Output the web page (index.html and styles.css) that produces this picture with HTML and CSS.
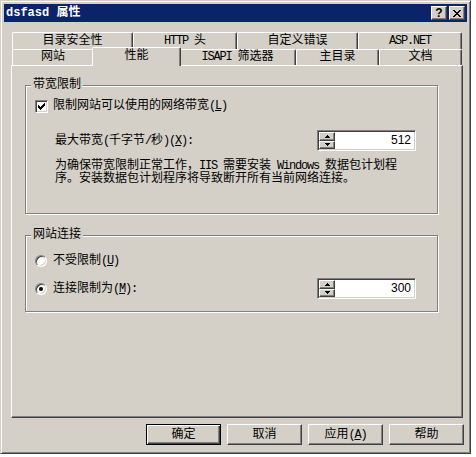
FILE: index.html
```html
<!DOCTYPE html>
<html lang="zh-CN">
<head>
  <meta charset="UTF-8">
  <title>dsfasd 属性</title>
  <link rel="stylesheet" href="styles.css">
</head>
<body>
  <div class="window">
    <div class="titlebar">
      <span class="title">dsfasd 属性</span>
      <div class="title-buttons">
        <span class="title-btn">?</span>
        <span class="title-btn">
          <svg width="8" height="7" viewBox="0 0 8 7"><path d="M0 0h2v1h-2z M6 0h2v1h-2z M1 1h2v1h-2z M5 1h2v1h-2z M2 2h4v1h-4z M3 3h2v1h-2z M2 4h4v1h-4z M1 5h2v1h-2z M5 5h2v1h-2z M0 6h2v1h-2z M6 6h2v1h-2z" fill="#000"/></svg>
        </span>
      </div>
    </div>

    <div class="tabs">
      <div class="tab-row back">
        <div class="tab tab-wide">目录安全性</div>
        <div class="tab tab-narrow"><span class="lat">HTTP </span>头</div>
        <div class="tab tab-wide">自定义错误</div>
        <div class="tab tab-narrow"><span class="lat">ASP.NET</span></div>
      </div>
      <div class="tab-row front">
        <div class="tab tab-site">网站</div>
        <div class="tab tab-perf active">性能</div>
        <div class="tab tab-isapi"><span class="lat">ISAPI </span>筛选器</div>
        <div class="tab tab-home">主目录</div>
        <div class="tab tab-docs">文档</div>
      </div>
    </div>

    <div class="panel">
      <div class="group group-bandwidth">
        <div class="group-title">带宽限制</div>
        <div class="row check-row">
          <span class="checkbox">
            <svg width="7" height="7" viewBox="0 0 7 7"><path d="M6 0h1v1h-1z M5 1h2v1h-2z M0 2h1v1h-1z M4 2h3v1h-3z M0 3h2v1h-2z M3 3h3v1h-3z M0 4h5v1h-5z M1 5h3v1h-3z M2 6h1v1h-1z" fill="#000"/></svg>
          </span>
          <span>限制网站可以使用的网络带宽<span class="lat">(<u>L</u>)</span></span>
        </div>
        <div class="row field-row">
          <span>最大带宽<span class="lat">(</span>千字节<span class="lat">/</span>秒<span class="lat">)(<u>X</u>):</span></span>
          <div class="spin">
            <div class="spin-buttons">
              <span class="spin-btn"><svg width="5" height="3" viewBox="0 0 5 3"><path d="M2 0h1v1h1v1h1v1h-5v-1h1v-1h1z" fill="#000"/></svg></span>
              <span class="spin-btn"><svg width="5" height="3" viewBox="0 0 5 3"><path d="M0 0h5v1h-1v1h-1v1h-1v-1h-1v-1h-1z" fill="#000"/></svg></span>
            </div>
            <span class="spin-value">512</span>
          </div>
        </div>
        <p class="note">为确保带宽限制正常工作，<span class="lat">IIS </span>需要安装<span class="lat"> Windows </span>数据包计划程<br>序。安装数据包计划程序将导致断开所有当前网络连接。</p>
      </div>

      <div class="group group-conn">
        <div class="group-title">网站连接</div>
        <div class="row radio-row">
          <span class="radio"></span>
          <span>不受限制<span class="lat">(<u>U</u>)</span></span>
        </div>
        <div class="row field-row radio-field">
          <span class="radio on"></span>
          <span>连接限制为<span class="lat">(<u>M</u>):</span></span>
          <div class="spin">
            <div class="spin-buttons">
              <span class="spin-btn"><svg width="5" height="3" viewBox="0 0 5 3"><path d="M2 0h1v1h1v1h1v1h-5v-1h1v-1h1z" fill="#000"/></svg></span>
              <span class="spin-btn"><svg width="5" height="3" viewBox="0 0 5 3"><path d="M0 0h5v1h-1v1h-1v1h-1v-1h-1v-1h-1z" fill="#000"/></svg></span>
            </div>
            <span class="spin-value">300</span>
          </div>
        </div>
      </div>
    </div>

    <div class="buttons">
      <span class="btn default">确定</span>
      <span class="btn">取消</span>
      <span class="btn">应用<span class="lat">(<u>A</u>)</span></span>
      <span class="btn">帮助</span>
    </div>
  </div>
</body>
</html>
```

FILE: styles.css
```css
/* Classic dialog look */
* {
  box-sizing: border-box;
}

body {
  margin: 0;
  background: #fff;
  color: #000;
  font: 12px/14px "Liberation Mono", "Noto Sans CJK SC", monospace;
}

u {
  text-decoration: underline;
}

/* Latin runs are half a CJK cell wide */
.lat {
  letter-spacing: -1.2px;
}

.window {
  width: 471px;
  height: 454px;
  background: #d4d0c8;
  border: 1px solid;
  border-color: #d4d0c8 #404040 #404040 #d4d0c8;
  box-shadow: inset 1px 1px #fff, inset -1px -1px #808080;
  padding: 3px;
}

/* Title bar */
.titlebar {
  height: 18px;
  background: #0a246a;
  display: flex;
  align-items: center;
  justify-content: space-between;
  padding: 0 2px;
}

.title {
  color: #fff;
  font-weight: bold;
  line-height: 18px;
}

.title-buttons {
  display: flex;
  gap: 2px;
}

.title-btn {
  width: 16px;
  height: 14px;
  background: #d4d0c8;
  border: 1px solid;
  border-color: #fff #404040 #404040 #fff;
  box-shadow: inset -1px -1px #808080;
  display: flex;
  align-items: center;
  justify-content: center;
  font: bold 12px/12px "Liberation Sans", sans-serif;
}

/* Tabs */
.tabs {
  margin: 10px 5px 0 8px;
}

.tab-row {
  display: flex;
  height: 17px;
}

.tab-row.front {
  height: 16px;
}

.tab {
  flex-shrink: 0;
  border: 1px solid;
  border-bottom: 0;
  border-color: #fff #404040 transparent #fff;
  box-shadow: inset -1px 0 #808080;
  border-radius: 2px 2px 0 0;
  text-align: center;
  line-height: 16px;
  white-space: nowrap;
}

.front .tab {
  line-height: 15px;
}

.tab-wide { width: 121px; }
.tab-narrow { width: 104px; }
.tab-site { width: 82px; }
.tab-perf { width: 85px; }
.tab-isapi { width: 117px; }
.tab-home { width: 83px; }
.tab-docs { width: 83px; }

.front .tab.active {
  width: 89px;
  height: 19px;
  margin: -2px -2px 0;
  line-height: 16px;
  background: #d4d0c8;
  position: relative;
  z-index: 1;
}

/* Page */
.panel {
  height: 353px;
  margin: 0 4px 0 7px;
  border: 1px solid;
  border-color: #fff #404040 #404040 #fff;
  box-shadow: inset -1px -1px #808080;
  padding: 19px 0 0 13px;
}

.group {
  width: 413px;
  border: 1px solid #808080;
  box-shadow: inset 1px 1px #fff, 1px 1px #fff;
}

.group-bandwidth {
  height: 129px;
}

.group-conn {
  height: 77px;
  margin-top: 21px;
}

.group-title {
  width: max-content;
  margin: -8px 0 0 5px;
  padding: 0 2px;
  background: #d4d0c8;
  line-height: 14px;
}

.row {
  display: flex;
  align-items: center;
  padding-left: 9px;
  white-space: nowrap;
}

.check-row {
  margin-top: 7px;
  gap: 5px;
}

.field-row {
  margin-top: 17px;
  padding-left: 29px;
}

.radio-row {
  margin-top: 12px;
  gap: 6px;
}

.radio-field {
  margin-top: 10px;
  padding-left: 9px;
  gap: 6px;
}

.field-row .spin {
  margin-left: auto;
  margin-right: 21px;
}

.note {
  margin: 9px 0 0 29px;
  line-height: 13px;
  white-space: nowrap;
}

.checkbox,
.radio {
  flex-shrink: 0;
  background: #fff;
  border: 1px solid;
  border-color: #808080 #fff #fff #808080;
  box-shadow: inset 1px 1px #404040, inset -1px -1px #d4d0c8;
  display: flex;
  align-items: center;
  justify-content: center;
}

.checkbox {
  width: 13px;
  height: 13px;
}

.radio {
  width: 12px;
  height: 12px;
  border-radius: 50%;
}

.radio.on::after {
  content: "";
  width: 4px;
  height: 4px;
  border-radius: 50%;
  background: #000;
}

/* Spin box */
.spin {
  width: 99px;
  height: 21px;
  display: flex;
  background: #fff;
  border: 1px solid;
  border-color: #808080 #fff #fff #808080;
  box-shadow: inset 1px 1px #404040, inset -1px -1px #d4d0c8;
  padding: 1px;
}

.spin-buttons {
  width: 16px;
  display: flex;
  flex-direction: column;
}

.spin-btn {
  flex: 1;
  background: #d4d0c8;
  border: 1px solid;
  border-color: #fff #404040 #404040 #fff;
  box-shadow: inset -1px -1px #808080;
  display: flex;
  align-items: center;
  justify-content: center;
}

.spin-value {
  flex: 1;
  text-align: right;
  padding-right: 3px;
  font-family: "Liberation Sans", sans-serif;
  line-height: 17px;
}

/* Dialog buttons */
.buttons {
  display: flex;
  justify-content: flex-end;
  gap: 6px;
  margin-top: 6px;
  padding-right: 3px;
}

.btn {
  width: 75px;
  height: 21px;
  border: 1px solid;
  border-color: #fff #404040 #404040 #fff;
  box-shadow: inset -1px -1px #808080;
  display: flex;
  align-items: center;
  justify-content: center;
}

.btn.default {
  border-color: #000;
  box-shadow: inset 1px 1px #fff, inset -1px -1px #404040, inset -2px -2px #808080;
}
```
